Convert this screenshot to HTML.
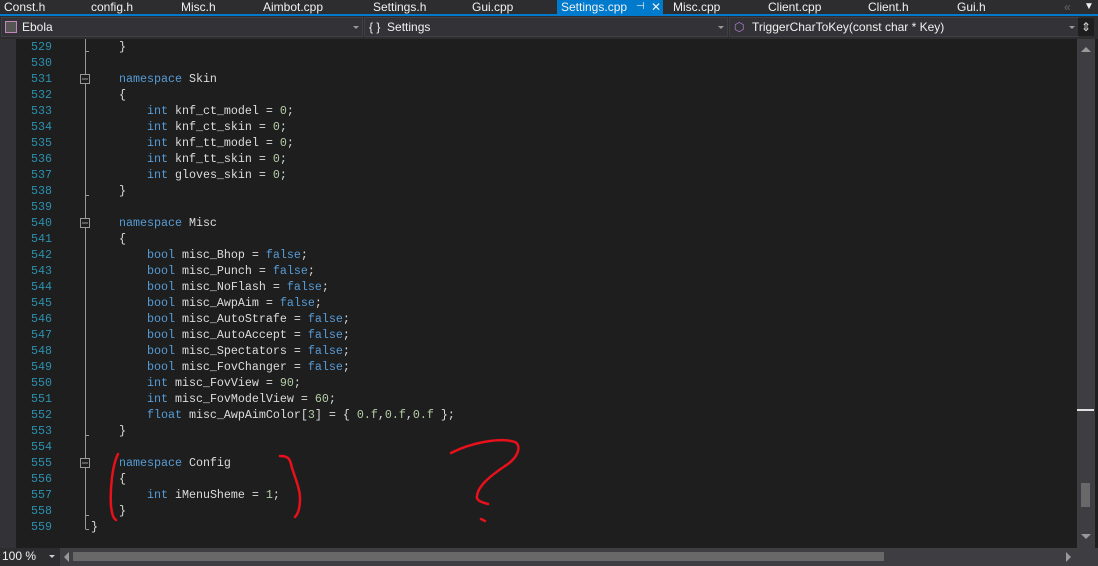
<!DOCTYPE html>
<html><head><meta charset="utf-8"><style>
*{margin:0;padding:0;box-sizing:border-box}
body{width:1098px;height:566px;overflow:hidden;background:#1e1e1e;position:relative;font-family:"Liberation Sans",sans-serif}
.tabs{position:absolute;left:0;top:0;width:1098px;height:15px;background:#2d2d30;color:#f1f1f1;font-size:12px}
.tabs span{position:absolute;top:0;line-height:14px}
.blue{position:absolute;left:0;top:14px;width:1098px;height:2px;background:#007acc}
.act{position:absolute;left:557px;top:0;width:106px;height:15px;background:#007acc}
.nav{position:absolute;left:0;top:16px;width:1098px;height:23px;background:#2d2d30}
.dd{position:absolute;top:1px;height:20px;background:#333337;border:1px solid #3f3f46;color:#f1f1f1;font-size:12px;line-height:18px}
.arr{position:absolute;right:3px;top:8px;width:0;height:0;border-left:3px solid transparent;border-right:3px solid transparent;border-top:3px solid #999}
.margin{position:absolute;left:0;top:39px;width:16px;height:509px;background:#333337}
.code{position:absolute;left:0;top:39px;font-family:"Liberation Mono",monospace;font-size:11.67px;line-height:16px;white-space:pre;color:#dcdcdc}
.ln{position:absolute;left:16px;top:39px;width:36px;text-align:right;font-family:"Liberation Mono",monospace;font-size:11.67px;line-height:16px;color:#2b91af;white-space:pre}
.k{color:#569cd6}.n{color:#b5cea8}
.vs{position:absolute;left:1077px;top:39px;width:18px;height:509px;background:#3e3e42}
.hs{position:absolute;left:0;top:548px;width:1098px;height:18px;background:#3e3e42}
</style></head><body>
<div class="tabs">
<div class="act"></div>
<span style="left:4px">Const.h</span><span style="left:91px">config.h</span><span style="left:181px">Misc.h</span><span style="left:263px">Aimbot.cpp</span><span style="left:373px">Settings.h</span><span style="left:472px">Gui.cpp</span>
<span style="left:561px">Settings.cpp</span><span style="left:636px;font-size:10px">⊣</span><span style="left:651px">✕</span>
<span style="left:673px">Misc.cpp</span><span style="left:768px">Client.cpp</span><span style="left:868px">Client.h</span><span style="left:957px">Gui.h</span>
<span style="left:1064px;color:#666">«</span><span style="left:1084px;font-size:10px">▼</span>
</div>
<div class="blue"></div>
<div class="nav">
<div class="dd" style="left:1px;width:362px"><span style="position:absolute;left:3px;top:3px;width:12px;height:12px;border:1px solid #c586c0;background:#555"></span><span style="position:absolute;left:20px">Ebola</span><div class="arr"></div></div>
<div class="dd" style="left:364px;width:364px"><span style="position:absolute;left:4px">{ }&nbsp; Settings</span><div class="arr"></div></div>
<div class="dd" style="left:729px;width:350px"><span style="position:absolute;left:4px;color:#b180d7">⬡</span><span style="position:absolute;left:22px">TriggerCharToKey(const char * Key)</span><div class="arr"></div></div>
<div style="position:absolute;left:1078px;top:2px;width:16px;height:18px;background:#1e1e1e;color:#ddd;font-size:12px;text-align:center;line-height:18px">⇕</div>
</div>
<div class="margin"></div>
<div class="ln">529
530
531
532
533
534
535
536
537
538
539
540
541
542
543
544
545
546
547
548
549
550
551
552
553
554
555
556
557
558
559</div>
<svg style="position:absolute;left:0;top:39px" width="100" height="509">
<g stroke="#999" fill="none" stroke-width="1">
<line x1="85.5" y1="0" x2="85.5" y2="490"/>
<line x1="85.5" y1="12.5" x2="89" y2="12.5"/>
<line x1="85.5" y1="156.5" x2="89" y2="156.5"/>
<line x1="85.5" y1="396.5" x2="89" y2="396.5"/>
<line x1="85.5" y1="476.5" x2="89" y2="476.5"/>
<line x1="85.5" y1="490.5" x2="89" y2="490.5"/>
<rect x="80.5" y="35.5" width="9" height="9" fill="#1e1e1e"/>
<rect x="80.5" y="179.5" width="9" height="9" fill="#1e1e1e"/>
<rect x="80.5" y="419.5" width="9" height="9" fill="#1e1e1e"/>
<line x1="82" y1="40" x2="88" y2="40"/><line x1="82" y1="184" x2="88" y2="184"/><line x1="82" y1="424" x2="88" y2="424"/>
</g></svg>
<div class="code" style="left:91px">    }

    <span class="k">namespace</span> Skin
    {
        <span class="k">int</span> knf_ct_model = <span class="n">0</span>;
        <span class="k">int</span> knf_ct_skin = <span class="n">0</span>;
        <span class="k">int</span> knf_tt_model = <span class="n">0</span>;
        <span class="k">int</span> knf_tt_skin = <span class="n">0</span>;
        <span class="k">int</span> gloves_skin = <span class="n">0</span>;
    }

    <span class="k">namespace</span> Misc
    {
        <span class="k">bool</span> misc_Bhop = <span class="k">false</span>;
        <span class="k">bool</span> misc_Punch = <span class="k">false</span>;
        <span class="k">bool</span> misc_NoFlash = <span class="k">false</span>;
        <span class="k">bool</span> misc_AwpAim = <span class="k">false</span>;
        <span class="k">bool</span> misc_AutoStrafe = <span class="k">false</span>;
        <span class="k">bool</span> misc_AutoAccept = <span class="k">false</span>;
        <span class="k">bool</span> misc_Spectators = <span class="k">false</span>;
        <span class="k">bool</span> misc_FovChanger = <span class="k">false</span>;
        <span class="k">int</span> misc_FovView = <span class="n">90</span>;
        <span class="k">int</span> misc_FovModelView = <span class="n">60</span>;
        <span class="k">float</span> misc_AwpAimColor[<span class="n">3</span>] = { <span class="n">0.f</span>,<span class="n">0.f</span>,<span class="n">0.f</span> };
    }

    <span class="k">namespace</span> Config
    {
        <span class="k">int</span> iMenuSheme = <span class="n">1</span>;
    }
</div>
<div class="code" style="left:91px;top:519px">}</div>
<svg style="position:absolute;left:0;top:0" width="1098" height="566">
<g stroke="#e8101a" stroke-width="2.5" fill="none" stroke-linecap="round">
<path d="M118 454 C112 466 110 490 111 506 C112 514 113 518 116 520"/>
<path d="M280 456 C288 456 290 458 292 468 C296 480 300 490 300 498 C300 508 298 514 295 517"/>
<path d="M451 453 C470 443 500 437 515 442 C522 446 518 458 505 466 C490 476 478 486 477 496 C476 500 480 502 488 504"/>
<path d="M481 519 L485 521"/>
</g></svg>
<div class="vs">
<div style="position:absolute;left:4px;top:8px;width:0;height:0;border-left:5px solid transparent;border-right:5px solid transparent;border-bottom:5px solid #999"></div>
<div style="position:absolute;left:0;top:370px;width:17px;height:2px;background:#e0e0e0"></div>
<div style="position:absolute;left:4px;top:444px;width:9px;height:24px;background:#686868"></div>
<div style="position:absolute;left:4px;top:495px;width:0;height:0;border-left:5px solid transparent;border-right:5px solid transparent;border-top:5px solid #999"></div>
</div>
<div class="hs">
<div style="position:absolute;left:0;top:0;width:60px;height:18px;background:#2d2d30;color:#f1f1f1;font-size:12px;line-height:17px;padding-left:2px">100 %</div>
<div style="position:absolute;left:49px;top:7px;border-left:3px solid transparent;border-right:3px solid transparent;border-top:3px solid #ccc"></div>
<div style="position:absolute;left:64px;top:4px;border-top:5px solid transparent;border-bottom:5px solid transparent;border-right:5px solid #999"></div>
<div style="position:absolute;left:73px;top:4px;width:811px;height:9px;background:#686868"></div>
<div style="position:absolute;left:1066px;top:4px;border-top:5px solid transparent;border-bottom:5px solid transparent;border-left:5px solid #999"></div>
</div>
</body></html>
